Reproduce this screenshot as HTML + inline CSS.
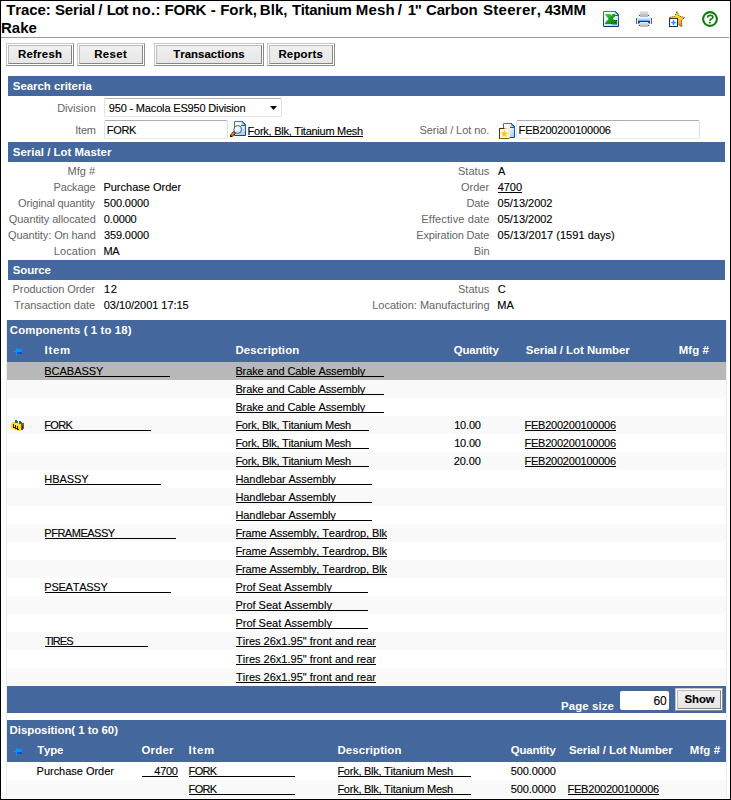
<!DOCTYPE html>
<html><head><meta charset="utf-8"><title>Trace: Serial / Lot no.</title>
<style>
html,body{margin:0;padding:0;background:#fff}
body{width:731px;height:800px;position:relative;overflow:hidden;font-family:"Liberation Sans",sans-serif}
.a{position:absolute;display:block}
.t{position:absolute;white-space:pre;line-height:1;display:block;font-kerning:none;font-variant-ligatures:none}
.r11{font-size:11px}
.r12{font-size:12px}
.b11{font-size:11.4px;font-weight:bold}
.ttl{font-size:15px;font-weight:bold;color:#000;transform:scaleY(1.03);transform-origin:0 13px}
.blk{color:#000;-webkit-text-stroke:0.12px #000}
.wh{color:#fff}
.lbl{color:#656565}
.lnk{color:#000;text-decoration:underline}
.bar{position:absolute;background:#44679d}
.btn{position:absolute;border:1px solid;border-color:#c6c6c6 #8c8c8c #8c8c8c #c6c6c6;background:#fff}
.btni{position:absolute;left:1px;top:1px;border:1px solid;border-color:#bcbcbc #858585 #858585 #bcbcbc;background:linear-gradient(#f0f0f0,#e6e6e6)}
.inp{position:absolute;border:1px solid;border-color:#abadb3 #dbdfe6 #e3e9ef #e2e3ea;background:#fff;border-radius:2px}
.sel{position:absolute;border:1px solid;border-color:#b0b2b6 #dde1e8 #e2e6ec #dde1e8;background:#fff;border-radius:2px}
#frame{position:absolute;left:0;top:0;width:729px;height:798px;border:1px solid #000;z-index:10}
</style></head>
<body>
<span class="t ttl" style="letter-spacing:-0.102px;left:6.13px;top:2px;">Trace:</span>
<span class="t ttl" style="letter-spacing:-0.154px;left:54.97px;top:2px;">Serial</span>
<span class="t ttl" style="left:98.35px;top:2px;">/</span>
<span class="t ttl" style="letter-spacing:-0.767px;left:106.70px;top:2px;">Lot</span>
<span class="t ttl" style="letter-spacing:0.315px;left:132.01px;top:2px;">no.:</span>
<span class="t ttl" style="letter-spacing:-0.251px;left:164.60px;top:2px;">FORK</span>
<span class="t ttl" style="left:210.71px;top:2px;">-</span>
<span class="t ttl" style="letter-spacing:0.009px;left:220.20px;top:2px;">Fork,</span>
<span class="t ttl" style="letter-spacing:0.066px;left:259.80px;top:2px;">Blk,</span>
<span class="t ttl" style="letter-spacing:-0.357px;left:291.93px;top:2px;">Titanium</span>
<span class="t ttl" style="letter-spacing:0.197px;left:355.70px;top:2px;">Mesh</span>
<span class="t ttl" style="left:397.85px;top:2px;">/</span>
<span class="t ttl" style="letter-spacing:-1.221px;left:407.66px;top:2px;">1"</span>
<span class="t ttl" style="letter-spacing:-0.191px;left:426.08px;top:2px;">Carbon</span>
<span class="t ttl" style="letter-spacing:0.281px;left:482.97px;top:2px;">Steerer,</span>
<span class="t ttl" style="letter-spacing:-0.148px;left:544.67px;top:2px;">43MM</span>
<span class="t ttl" style="letter-spacing:-0.048px;left:1.05px;top:20px;">Rake</span>
<div class="a" style="left:1px;top:37px;width:728px;height:1px;background:#9a9a9a"></div>
<svg class="a" style="left:603px;top:11px" width="16" height="16" viewBox="0 0 16 16">
<defs><linearGradient id="pg" x1="0" y1="0" x2="0.6" y2="1"><stop offset="0" stop-color="#ffffff"/><stop offset="0.35" stop-color="#f4f9ff"/><stop offset="1" stop-color="#b4d6fc"/></linearGradient>
<linearGradient id="xb" x1="0" y1="0" x2="0" y2="1"><stop offset="0" stop-color="#2a7acc"/><stop offset="1" stop-color="#0a3c8c"/></linearGradient>
<linearGradient id="xg" x1="0" y1="0" x2="1" y2="1"><stop offset="0" stop-color="#5cc85c"/><stop offset="0.45" stop-color="#1aa01a"/><stop offset="1" stop-color="#078407"/></linearGradient></defs>
<path d="M0.5 0.5H12L15.5 4V15.5H0.5Z" fill="url(#pg)" stroke="url(#xb)"/>
<path d="M11.5 1V4.5H15Z" fill="#b8dcff"/>
<path d="M11 4.5H15.5" stroke="#1a5cb0" stroke-width="1"/>
<path d="M12 0.5L15.5 4" stroke="#0c2c60" stroke-width="1.1" stroke-dasharray="0.9 0.5"/>
<path d="M2 3H7L8.4 4.8L9.2 3H12V5.4L9.8 7.6L11 9H14V13.6H9.4L9 13H2V12L5.6 8L2 3.6Z" fill="url(#xg)"/>
<rect x="11" y="9" width="1" height="1" fill="#043804"/><rect x="13" y="9" width="1" height="1" fill="#043804"/><rect x="12" y="11" width="1" height="1" fill="#043804"/><rect x="8" y="12" width="1" height="1" fill="#043804"/>
</svg>
<svg class="a" style="left:636px;top:11px" width="16" height="16" viewBox="0 0 16 16">
<defs><linearGradient id="pb" x1="0" y1="0" x2="0" y2="1"><stop offset="0" stop-color="#f4faff"/><stop offset="0.2" stop-color="#eaf5ff"/><stop offset="0.4" stop-color="#9cd0fc"/><stop offset="0.55" stop-color="#4c9cf0"/><stop offset="0.6" stop-color="#0a3cb0"/><stop offset="0.7" stop-color="#0a3cb0"/><stop offset="0.8" stop-color="#2a70d8"/><stop offset="1" stop-color="#2a70d8"/></linearGradient>
<linearGradient id="pp" x1="0" y1="0" x2="0" y2="1"><stop offset="0" stop-color="#e8e8e8"/><stop offset="1" stop-color="#b6b6b6"/></linearGradient>
<linearGradient id="pq" x1="0" y1="0" x2="0" y2="1"><stop offset="0" stop-color="#ecebe8"/><stop offset="1" stop-color="#b4b4b4"/></linearGradient></defs>
<rect x="4" y="0" width="8" height="5" fill="url(#pp)"/>
<rect x="4" y="5" width="8" height="0.9" fill="#6c6c6c"/>
<rect x="3" y="4" width="1" height="1" fill="#444"/><rect x="12" y="4" width="1" height="1" fill="#444"/>
<path d="M2.5 5.5L0.5 7.5M13.5 5.5L15.5 7.5" stroke="#c0c0c0" stroke-width="0.8"/>
<rect x="0" y="7" width="1" height="6" fill="#5c5c5c"/><rect x="15" y="7" width="1" height="6" fill="#5c5c5c"/>
<rect x="1" y="6.4" width="1.2" height="6.4" fill="#ecebe6"/><rect x="13.8" y="6.4" width="1.2" height="6.4" fill="#ecebe6"/>
<path d="M3 5.4H13Q14 5.4 14 6.4V12Q14 13 13 13.6H3Q2 13 2 12V6.4Q2 5.4 3 5.4Z" fill="url(#pb)"/>
<rect x="3" y="12" width="10" height="2.6" fill="#b4e0ff"/>
<rect x="4" y="11" width="8" height="5" fill="url(#pq)"/>
<rect x="3" y="14" width="1" height="1" fill="#333"/><rect x="12" y="14" width="1" height="1" fill="#333"/>
</svg>
<svg class="a" style="left:669px;top:11px" width="16" height="16" viewBox="0 0 16 16">
<defs><linearGradient id="sg" x1="0.35" y1="0.2" x2="0.75" y2="1"><stop offset="0" stop-color="#ffe000"/><stop offset="0.45" stop-color="#ffd41c"/><stop offset="0.75" stop-color="#ff9040"/><stop offset="1" stop-color="#ff6a3c"/></linearGradient></defs>
<path d="M8 0.5L10.2 5.4L15.5 6.3L12.3 10L13 15.6L8 13L3 15.6L3.7 10L0.5 6.3L5.8 5.4Z" fill="url(#sg)" stroke="#4a2a08" stroke-width="1" stroke-dasharray="1 1" stroke-linejoin="round"/>
<rect x="0.5" y="7.5" width="8" height="8" fill="#ffffff" stroke="#0a3474"/>
<rect x="1" y="7" width="7" height="1" fill="#3c3c10"/>
<rect x="1.4" y="8.4" width="6.2" height="6.2" fill="#f2f8ff"/>
<rect x="3.9" y="9.1" width="1.3" height="4.9" rx="0.6" fill="#1c8cff"/><rect x="2.1" y="10.9" width="4.9" height="1.3" rx="0.6" fill="#1c8cff"/>
<rect x="3.5" y="10.5" width="2.1" height="2.1" fill="#1c8cff" opacity="0.5"/>
</svg>
<svg class="a" style="left:702px;top:11px" width="16" height="16" viewBox="0 0 16 16">
<circle cx="8" cy="8" r="6.9" fill="#fff" stroke="#078007" stroke-width="2.1"/>
<path d="M5.6 6.5C5.6 3.7 10.9 3.6 10.9 6.2C10.9 7.8 8 7.9 7.9 9.8" fill="none" stroke="#078007" stroke-width="1.7"/>
<rect x="6.9" y="10.8" width="1.9" height="1.6" rx="0.4" fill="#078007"/>
</svg>
<div class="btn" style="left:6px;top:43px;width:66px;height:21px"><div class="btni" style="width:62px;height:17px"></div></div>
<span class="t b11 blk" style="letter-spacing:0.245px;left:18.04px;top:49px;">Refresh</span>
<div class="btn" style="left:77px;top:43px;width:66px;height:21px"><div class="btni" style="width:62px;height:17px"></div></div>
<span class="t b11 blk" style="letter-spacing:0.401px;left:94.24px;top:49px;">Reset</span>
<div class="btn" style="left:154px;top:43px;width:108px;height:21px"><div class="btni" style="width:104px;height:17px"></div></div>
<span class="t b11 blk" style="letter-spacing:0.031px;left:173.27px;top:49px;">Transactions</span>
<div class="btn" style="left:267px;top:43px;width:66px;height:21px"><div class="btni" style="width:62px;height:17px"></div></div>
<span class="t b11 blk" style="letter-spacing:0.210px;left:278.44px;top:49px;">Reports</span>
<div class="bar" style="left:8px;top:76px;width:717px;height:20px"></div>
<span class="t b11 wh" style="letter-spacing:-0.011px;left:12.87px;top:81px;">Search criteria</span>
<span class="t r11 lbl" style="letter-spacing:0.022px;left:57.15px;top:103px;">Division</span>
<div class="sel" style="left:104px;top:98px;width:176px;height:17px"></div>
<svg class="a" style="left:269px;top:105px" width="9" height="6" viewBox="0 0 9 6"><path d="M1 1H8L4.5 5Z" fill="#000"/></svg>
<span class="t r11 blk" style="letter-spacing:-0.164px;left:108.73px;top:103px;">950 - Macola ES950 Division</span>
<span class="t r11 lbl" style="letter-spacing:-0.218px;left:75.28px;top:125px;">Item</span>
<div class="inp" style="left:104px;top:120px;width:122px;height:17px"></div>
<span class="t r11 blk" style="letter-spacing:-0.343px;left:106.80px;top:125px;">FORK</span>
<svg class="a" style="left:230px;top:121px" width="16" height="16" viewBox="0 0 16 16">
<defs><linearGradient id="mg" x1="0" y1="0" x2="0.6" y2="1"><stop offset="0" stop-color="#ffffff"/><stop offset="0.4" stop-color="#f4f9ff"/><stop offset="1" stop-color="#a8d2fc"/></linearGradient>
<linearGradient id="mb" x1="0" y1="0" x2="0" y2="1"><stop offset="0" stop-color="#2a7acc"/><stop offset="1" stop-color="#0a4496"/></linearGradient>
<radialGradient id="ml" cx="0.35" cy="0.35" r="0.8"><stop offset="0" stop-color="#ffffff"/><stop offset="0.5" stop-color="#e4f2ff"/><stop offset="1" stop-color="#8cc8fa"/></radialGradient></defs>
<path d="M4.5 0.5H12L15.5 4V14.5H4.5Z" fill="url(#mg)" stroke="url(#mb)"/>
<path d="M11.5 1V4.5H15Z" fill="#9cd0ff"/>
<path d="M11 4.5H15.5" stroke="#1a5cb0" stroke-width="1"/>
<path d="M12 0.5L15.5 4" stroke="#0c2c60" stroke-width="1.1" stroke-dasharray="0.9 0.5"/>
<path d="M4.6 11.4L1 15" stroke="#1a0a00" stroke-width="3" stroke-linecap="square" stroke-dasharray="0.8 0.6"/>
<path d="M4.3 11.7L1.4 14.6" stroke="#ff8420" stroke-width="1.8" stroke-linecap="butt"/>
<circle cx="7.7" cy="8.5" r="3.9" fill="url(#ml)" stroke="#5c5c5c" stroke-width="1"/>
</svg>
<span class="t r11 blk" style="letter-spacing:-0.262px;left:247.60px;top:126px;">Fork, Blk, Titanium Mesh</span>
<div class="a" style="left:248px;top:136px;width:115px;height:1px;background:#000"></div>
<span class="t r11 lbl" style="letter-spacing:-0.078px;left:419.50px;top:125px;">Serial / Lot no.</span>
<svg class="a" style="left:499px;top:123px" width="16" height="16" viewBox="0 0 16 16">
<defs><linearGradient id="dg" x1="0" y1="0" x2="0.6" y2="1"><stop offset="0" stop-color="#ffffff"/><stop offset="0.4" stop-color="#f4f9ff"/><stop offset="1" stop-color="#a8d2fc"/></linearGradient>
<linearGradient id="db" x1="0" y1="0" x2="0" y2="1"><stop offset="0" stop-color="#2a7acc"/><stop offset="1" stop-color="#0a4496"/></linearGradient>
<linearGradient id="dt" x1="0" y1="0" x2="1" y2="0"><stop offset="0" stop-color="#5a2c00"/><stop offset="0.45" stop-color="#5a2c00"/><stop offset="0.6" stop-color="#e8d890"/><stop offset="1" stop-color="#f4ecc0"/></linearGradient></defs>
<path d="M4.5 0.5H12L15.5 4V14.5H4.5Z" fill="url(#dg)" stroke="url(#db)"/>
<path d="M11.5 1V4.5H15Z" fill="#9cd0ff"/>
<path d="M11 4.5H15.5" stroke="#1a5cb0" stroke-width="1"/>
<path d="M12 0.5L15.5 4" stroke="#0c2c60" stroke-width="1.1" stroke-dasharray="0.9 0.5"/>
<rect x="0" y="5" width="10.4" height="11" fill="#ffffff"/>
<rect x="9" y="6" width="1.6" height="9" fill="#f6efc8"/>
<rect x="0" y="5" width="10.4" height="1" fill="url(#dt)"/>
<rect x="0" y="5" width="1" height="11" fill="#5a3000"/>
<rect x="0.6" y="15" width="10" height="1" fill="#7c5c00"/>
<path d="M5.4 7.4L6.3 9.6L8.7 9.8L6.9 11.3L7.5 13.7L5.4 12.4L3.3 13.7L3.9 11.3L2.1 9.8L4.5 9.6Z" fill="#ffd000" stroke="#ffbc20" stroke-width="0.6" stroke-linejoin="round"/>
</svg>
<div class="inp" style="left:516px;top:120px;width:182px;height:17px"></div>
<span class="t r11 blk" style="letter-spacing:-0.173px;left:518.60px;top:125px;">FEB200200100006</span>
<div class="bar" style="left:8px;top:142px;width:717px;height:20px"></div>
<span class="t b11 wh" style="letter-spacing:0.020px;left:12.87px;top:147px;">Serial / Lot Master</span>
<span class="t r11 lbl" style="letter-spacing:0.036px;left:67.50px;top:166px;">Mfg #</span>
<span class="t r11 lbl" style="letter-spacing:0.022px;left:458.00px;top:166px;">Status</span>
<span class="t r11 blk" style="left:498.03px;top:166px;">A</span>
<span class="t r11 lbl" style="letter-spacing:-0.119px;left:53.50px;top:182px;">Package</span>
<span class="t r11 blk" style="letter-spacing:0.003px;left:103.40px;top:182px;">Purchase Order</span>
<span class="t r11 lbl" style="letter-spacing:-0.029px;left:461.08px;top:182px;">Order</span>
<span class="t r11 blk" style="letter-spacing:-0.080px;left:497.80px;top:182px;">4700</span>
<div class="a" style="left:498px;top:192px;width:24px;height:1px;background:#000"></div>
<span class="t r11 lbl" style="letter-spacing:-0.147px;left:17.98px;top:198px;">Original quantity</span>
<span class="t r11 blk" style="letter-spacing:-0.101px;left:103.86px;top:198px;">500.0000</span>
<span class="t r11 lbl" style="letter-spacing:-0.081px;left:466.40px;top:198px;">Date</span>
<span class="t r11 blk" style="letter-spacing:-0.025px;left:497.62px;top:198px;">05/13/2002</span>
<span class="t r11 lbl" style="letter-spacing:-0.060px;left:8.78px;top:214px;">Quantity allocated</span>
<span class="t r11 blk" style="letter-spacing:-0.157px;left:103.87px;top:214px;">0.0000</span>
<span class="t r11 lbl" style="letter-spacing:0.111px;left:421.30px;top:214px;">Effective date</span>
<span class="t r11 blk" style="letter-spacing:-0.025px;left:497.62px;top:214px;">05/13/2002</span>
<span class="t r11 lbl" style="letter-spacing:-0.091px;left:7.98px;top:230px;">Quantity: On hand</span>
<span class="t r11 blk" style="letter-spacing:-0.104px;left:103.88px;top:230px;">359.0000</span>
<span class="t r11 lbl" style="letter-spacing:-0.144px;left:416.20px;top:230px;">Expiration Date</span>
<span class="t r11 blk" style="letter-spacing:0.046px;left:497.62px;top:230px;">05/13/2017 (1591 days)</span>
<span class="t r11 lbl" style="letter-spacing:0.061px;left:53.80px;top:246px;">Location</span>
<span class="t r11 blk" style="letter-spacing:-0.276px;left:103.40px;top:246px;">MA</span>
<span class="t r11 lbl" style="letter-spacing:0.009px;left:473.70px;top:246px;">Bin</span>
<div class="bar" style="left:8px;top:260px;width:717px;height:20px"></div>
<span class="t b11 wh" style="letter-spacing:-0.126px;left:12.87px;top:265px;">Source</span>
<span class="t r11 lbl" style="letter-spacing:-0.092px;left:12.60px;top:284px;">Production Order</span>
<span class="t r11 blk" style="letter-spacing:0.656px;left:103.96px;top:284px;">12</span>
<span class="t r11 lbl" style="letter-spacing:0.022px;left:458.00px;top:284px;">Status</span>
<span class="t r11 blk" style="left:497.64px;top:284px;">C</span>
<span class="t r11 lbl" style="letter-spacing:-0.053px;left:13.95px;top:300px;">Transaction date</span>
<span class="t r11 blk" style="letter-spacing:-0.050px;left:103.77px;top:300px;">03/10/2001 17:15</span>
<span class="t r11 lbl" style="letter-spacing:0.000px;left:372.20px;top:300px;">Location: Manufacturing</span>
<span class="t r11 blk" style="letter-spacing:0.024px;left:497.30px;top:300px;">MA</span>
<div class="a" style="left:6px;top:320px;width:721px;height:478px;background:#ececec"></div>
<div class="a" style="left:7px;top:320px;width:719px;height:479px;background:#ffffff"></div>
<div class="bar" style="left:7px;top:320px;width:719px;height:42px"></div>
<span class="t b11 wh" style="letter-spacing:0.101px;left:9.83px;top:325px;">Components ( 1 to 18)</span>
<svg class="a" style="left:13px;top:348px" width="10" height="8" viewBox="0 0 10 8"><rect x="0" y="3" width="3" height="1" fill="#1c8cf4"/><rect x="3" y="0" width="1" height="7" fill="#0c94ff"/><rect x="4" y="1" width="5" height="3" fill="#0094ff"/><rect x="4" y="4" width="5" height="2" fill="#0058dc"/></svg>
<span class="t b11 wh" style="letter-spacing:0.760px;left:44.49px;top:345px;">Item</span>
<span class="t b11 wh" style="letter-spacing:0.101px;left:235.49px;top:345px;">Description</span>
<span class="t b11 wh" style="letter-spacing:-0.158px;left:453.73px;top:345px;">Quantity</span>
<span class="t b11 wh" style="letter-spacing:-0.029px;left:525.87px;top:345px;">Serial / Lot Number</span>
<span class="t b11 wh" style="letter-spacing:0.108px;left:678.74px;top:345px;">Mfg #</span>
<div class="a" style="left:7px;top:362px;width:719px;height:18px;background:#b8b8b8"></div>
<span class="t r11 blk" style="letter-spacing:-0.023px;left:44.30px;top:366px;">BCABASSY</span>
<div class="a" style="left:45px;top:376px;width:125px;height:1px;background:#000"></div>
<span class="t r11 blk" style="letter-spacing:-0.120px;left:235.40px;top:366px;">Brake and Cable Assembly</span>
<div class="a" style="left:236px;top:376px;width:148px;height:1px;background:#000"></div>
<div class="a" style="left:7px;top:380px;width:719px;height:18px;background:#f9f9f9"></div>
<span class="t r11 blk" style="letter-spacing:-0.120px;left:235.40px;top:384px;">Brake and Cable Assembly</span>
<div class="a" style="left:236px;top:394px;width:148px;height:1px;background:#000"></div>
<div class="a" style="left:7px;top:398px;width:719px;height:18px;background:#ffffff"></div>
<span class="t r11 blk" style="letter-spacing:-0.120px;left:235.40px;top:402px;">Brake and Cable Assembly</span>
<div class="a" style="left:236px;top:412px;width:148px;height:1px;background:#000"></div>
<div class="a" style="left:7px;top:416px;width:719px;height:18px;background:#f9f9f9"></div>
<span class="t r11 blk" style="letter-spacing:-0.643px;left:44.30px;top:420px;">FORK</span>
<div class="a" style="left:45px;top:430px;width:106px;height:1px;background:#000"></div>
<span class="t r11 blk" style="letter-spacing:-0.253px;left:235.40px;top:420px;">Fork, Blk, Titanium Mesh</span>
<div class="a" style="left:236px;top:430px;width:133px;height:1px;background:#000"></div>
<span class="t r11 blk" style="letter-spacing:-0.190px;left:454.16px;top:420px;">10.00</span>
<span class="t r11 blk" style="letter-spacing:-0.230px;left:524.50px;top:420px;">FEB200200100006</span>
<div class="a" style="left:525px;top:430px;width:91px;height:1px;background:#000"></div>
<div class="a" style="left:7px;top:434px;width:719px;height:18px;background:#ffffff"></div>
<span class="t r11 blk" style="letter-spacing:-0.253px;left:235.40px;top:438px;">Fork, Blk, Titanium Mesh</span>
<div class="a" style="left:236px;top:448px;width:133px;height:1px;background:#000"></div>
<span class="t r11 blk" style="letter-spacing:-0.190px;left:454.16px;top:438px;">10.00</span>
<span class="t r11 blk" style="letter-spacing:-0.230px;left:524.50px;top:438px;">FEB200200100006</span>
<div class="a" style="left:525px;top:448px;width:91px;height:1px;background:#000"></div>
<div class="a" style="left:7px;top:452px;width:719px;height:18px;background:#f9f9f9"></div>
<span class="t r11 blk" style="letter-spacing:-0.253px;left:235.40px;top:456px;">Fork, Blk, Titanium Mesh</span>
<div class="a" style="left:236px;top:466px;width:133px;height:1px;background:#000"></div>
<span class="t r11 blk" style="letter-spacing:-0.061px;left:453.65px;top:456px;">20.00</span>
<span class="t r11 blk" style="letter-spacing:-0.230px;left:524.50px;top:456px;">FEB200200100006</span>
<div class="a" style="left:525px;top:466px;width:91px;height:1px;background:#000"></div>
<div class="a" style="left:7px;top:470px;width:719px;height:18px;background:#ffffff"></div>
<span class="t r11 blk" style="letter-spacing:-0.057px;left:44.30px;top:474px;">HBASSY</span>
<div class="a" style="left:45px;top:484px;width:116px;height:1px;background:#000"></div>
<span class="t r11 blk" style="letter-spacing:-0.063px;left:235.40px;top:474px;">Handlebar Assembly</span>
<div class="a" style="left:236px;top:484px;width:136px;height:1px;background:#000"></div>
<div class="a" style="left:7px;top:488px;width:719px;height:18px;background:#f9f9f9"></div>
<span class="t r11 blk" style="letter-spacing:-0.063px;left:235.40px;top:492px;">Handlebar Assembly</span>
<div class="a" style="left:236px;top:502px;width:136px;height:1px;background:#000"></div>
<div class="a" style="left:7px;top:506px;width:719px;height:18px;background:#ffffff"></div>
<span class="t r11 blk" style="letter-spacing:-0.063px;left:235.40px;top:510px;">Handlebar Assembly</span>
<div class="a" style="left:236px;top:520px;width:136px;height:1px;background:#000"></div>
<div class="a" style="left:7px;top:524px;width:719px;height:18px;background:#f9f9f9"></div>
<span class="t r11 blk" style="letter-spacing:-0.482px;left:44.30px;top:528px;">PFRAMEASSY</span>
<div class="a" style="left:45px;top:538px;width:131px;height:1px;background:#000"></div>
<span class="t r11 blk" style="letter-spacing:-0.110px;left:235.40px;top:528px;">Frame Assembly, Teardrop, Blk</span>
<div class="a" style="left:236px;top:538px;width:151px;height:1px;background:#000"></div>
<div class="a" style="left:7px;top:542px;width:719px;height:18px;background:#ffffff"></div>
<span class="t r11 blk" style="letter-spacing:-0.110px;left:235.40px;top:546px;">Frame Assembly, Teardrop, Blk</span>
<div class="a" style="left:236px;top:556px;width:151px;height:1px;background:#000"></div>
<div class="a" style="left:7px;top:560px;width:719px;height:18px;background:#f9f9f9"></div>
<span class="t r11 blk" style="letter-spacing:-0.110px;left:235.40px;top:564px;">Frame Assembly, Teardrop, Blk</span>
<div class="a" style="left:236px;top:574px;width:151px;height:1px;background:#000"></div>
<div class="a" style="left:7px;top:578px;width:719px;height:18px;background:#ffffff"></div>
<span class="t r11 blk" style="letter-spacing:-0.246px;left:44.30px;top:582px;">PSEATASSY</span>
<div class="a" style="left:45px;top:592px;width:126px;height:1px;background:#000"></div>
<span class="t r11 blk" style="letter-spacing:-0.004px;left:235.40px;top:582px;">Prof Seat Assembly</span>
<div class="a" style="left:236px;top:592px;width:132px;height:1px;background:#000"></div>
<div class="a" style="left:7px;top:596px;width:719px;height:18px;background:#f9f9f9"></div>
<span class="t r11 blk" style="letter-spacing:-0.004px;left:235.40px;top:600px;">Prof Seat Assembly</span>
<div class="a" style="left:236px;top:610px;width:132px;height:1px;background:#000"></div>
<div class="a" style="left:7px;top:614px;width:719px;height:18px;background:#ffffff"></div>
<span class="t r11 blk" style="letter-spacing:-0.004px;left:235.40px;top:618px;">Prof Seat Assembly</span>
<div class="a" style="left:236px;top:628px;width:132px;height:1px;background:#000"></div>
<div class="a" style="left:7px;top:632px;width:719px;height:18px;background:#f9f9f9"></div>
<span class="t r11 blk" style="letter-spacing:-0.935px;left:44.95px;top:636px;">TIRES</span>
<div class="a" style="left:45px;top:646px;width:103px;height:1px;background:#000"></div>
<span class="t r11 blk" style="letter-spacing:0.010px;left:236.05px;top:636px;">Tires 26x1.95" front and rear</span>
<div class="a" style="left:236px;top:646px;width:140px;height:1px;background:#000"></div>
<div class="a" style="left:7px;top:650px;width:719px;height:18px;background:#ffffff"></div>
<span class="t r11 blk" style="letter-spacing:0.010px;left:236.05px;top:654px;">Tires 26x1.95" front and rear</span>
<div class="a" style="left:236px;top:664px;width:140px;height:1px;background:#000"></div>
<div class="a" style="left:7px;top:668px;width:719px;height:18px;background:#f9f9f9"></div>
<span class="t r11 blk" style="letter-spacing:0.010px;left:236.05px;top:672px;">Tires 26x1.95" front and rear</span>
<div class="a" style="left:236px;top:682px;width:140px;height:1px;background:#000"></div>
<svg class="a" style="left:11px;top:420px" width="13" height="11" viewBox="0 0 13 11" shape-rendering="crispEdges">
<path d="M0 3H1V2H3V1H4V2H7V3H10V4H10V11H6V10H3V9H0Z" fill="#ffdc1c"/>
<rect x="3" y="1" width="1" height="1" fill="#ffe860"/>
<rect x="0" y="3" width="3" height="1" fill="#c8f088"/><rect x="3" y="4" width="4" height="1" fill="#c8f088"/><rect x="7" y="5" width="3" height="1" fill="#c8f088"/>
<rect x="4" y="0" width="2" height="3" fill="#127474"/><rect x="6" y="1" width="1" height="2" fill="#a04420"/>
<rect x="8" y="1" width="2" height="3" fill="#127474"/><rect x="10" y="2" width="1" height="2" fill="#a04420"/>
<rect x="2" y="4" width="1" height="4" fill="#4c0808"/><rect x="3" y="7" width="1" height="1" fill="#4c0808"/>
<rect x="4" y="5" width="1" height="4" fill="#4c0808"/><rect x="5" y="8" width="1" height="1" fill="#4c0808"/>
<rect x="6" y="6" width="1" height="4" fill="#4c0808"/><rect x="7" y="9" width="1" height="1" fill="#4c0808"/>
<path d="M10 4H11V3H13V9H12V10H10Z" fill="#a44c24"/>
<rect x="11" y="6" width="1" height="3" fill="#500c0c"/>
<rect x="10" y="8" width="2" height="2" fill="#127474"/>
</svg>
<div class="bar" style="left:7px;top:686px;width:719px;height:27px"></div>
<span class="t b11 wh" style="letter-spacing:0.117px;left:560.99px;top:701px;">Page size</span>
<div class="a" style="left:620px;top:691px;width:49px;height:19px;background:#fff;border-radius:2px"></div>
<span class="t r12 blk" style="letter-spacing:-0.070px;left:653.39px;top:695px;">60</span>
<div class="btn" style="left:675px;top:688px;width:46px;height:21px"><div class="btni" style="width:42px;height:17px"></div></div>
<span class="t b11 blk" style="letter-spacing:-0.031px;left:684.42px;top:694px;">Show</span>
<div class="bar" style="left:7px;top:720px;width:719px;height:42px"></div>
<span class="t b11 wh" style="letter-spacing:-0.020px;left:9.54px;top:725px;">Disposition( 1 to 60)</span>
<svg class="a" style="left:13px;top:748px" width="10" height="8" viewBox="0 0 10 8"><rect x="0" y="3" width="3" height="1" fill="#1c8cf4"/><rect x="3" y="0" width="1" height="7" fill="#0c94ff"/><rect x="4" y="1" width="5" height="3" fill="#0094ff"/><rect x="4" y="4" width="5" height="2" fill="#0058dc"/></svg>
<span class="t b11 wh" style="letter-spacing:-0.197px;left:37.37px;top:745px;">Type</span>
<span class="t b11 wh" style="letter-spacing:0.212px;left:141.53px;top:745px;">Order</span>
<span class="t b11 wh" style="letter-spacing:0.760px;left:188.49px;top:745px;">Item</span>
<span class="t b11 wh" style="letter-spacing:0.126px;left:337.49px;top:745px;">Description</span>
<span class="t b11 wh" style="letter-spacing:-0.172px;left:510.78px;top:745px;">Quantity</span>
<span class="t b11 wh" style="letter-spacing:-0.043px;left:568.92px;top:745px;">Serial / Lot Number</span>
<span class="t b11 wh" style="letter-spacing:0.171px;left:689.74px;top:745px;">Mfg #</span>
<div class="a" style="left:7px;top:762px;width:719px;height:18px;background:#ffffff"></div>
<div class="a" style="left:7px;top:780px;width:719px;height:18px;background:#f9f9f9"></div>
<span class="t r11 blk" style="letter-spacing:-0.024px;left:36.60px;top:766px;">Purchase Order</span>
<span class="t r11 blk" style="letter-spacing:-0.330px;left:154.35px;top:766px;">4700</span>
<div class="a" style="left:142px;top:776px;width:35.5px;height:1px;background:#000"></div>
<span class="t r11 blk" style="letter-spacing:-0.677px;left:188.60px;top:766px;">FORK</span>
<div class="a" style="left:189px;top:776px;width:105.5px;height:1px;background:#000"></div>
<span class="t r11 blk" style="letter-spacing:-0.253px;left:337.40px;top:766px;">Fork, Blk, Titanium Mesh</span>
<div class="a" style="left:338px;top:776px;width:132.75px;height:1px;background:#000"></div>
<span class="t r11 blk" style="letter-spacing:-0.109px;left:510.81px;top:766px;">500.0000</span>
<span class="t r11 blk" style="letter-spacing:-0.677px;left:188.60px;top:784px;">FORK</span>
<div class="a" style="left:189px;top:794px;width:105.5px;height:1px;background:#000"></div>
<span class="t r11 blk" style="letter-spacing:-0.253px;left:337.40px;top:784px;">Fork, Blk, Titanium Mesh</span>
<div class="a" style="left:338px;top:794px;width:132.75px;height:1px;background:#000"></div>
<span class="t r11 blk" style="letter-spacing:-0.109px;left:510.81px;top:784px;">500.0000</span>
<span class="t r11 blk" style="letter-spacing:-0.219px;left:567.50px;top:784px;">FEB200200100006</span>
<div class="a" style="left:568px;top:794px;width:91px;height:1px;background:#000"></div>
<div id="frame"></div>
</body></html>
